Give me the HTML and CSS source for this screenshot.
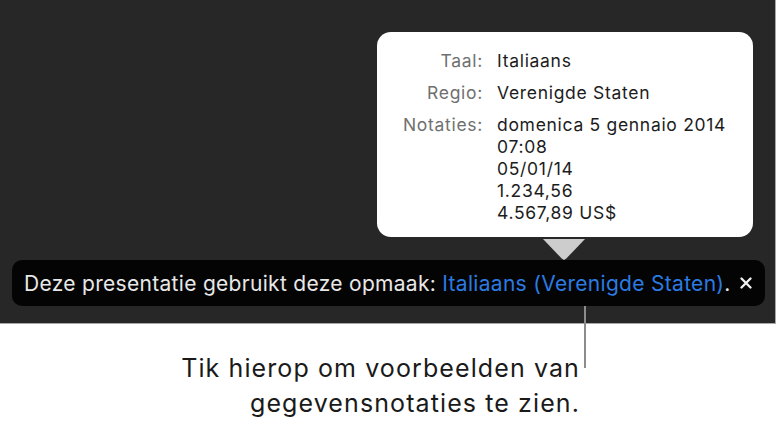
FILE: index.html
```html
<!DOCTYPE html>
<html lang="nl">
<head>
<meta charset="utf-8">
<title>Notaties</title>
<link rel="stylesheet" href="styles.css">
</head>
<body>
<div class="stage">
  <div class="popover">
    <div class="pop-grid">
      <div class="lbl">Taal:</div>
      <div class="val">Italiaans</div>
      <div class="lbl">Regio:</div>
      <div class="val">Verenigde Staten</div>
      <div class="lbl">Notaties:</div>
      <div class="val">domenica 5 gennaio 2014<br>07:08<br>05/01/14<br>1.234,56<br>4.567,89 US$</div>
    </div>
  </div>
  <div class="arrow-row"><div class="arrow"></div></div>
  <div class="banner">
    <span class="msg">Deze presentatie gebruikt deze opmaak: <span class="link">Italiaans (Verenigde Staten)</span>.</span>
    <svg class="close" width="12" height="12" viewBox="0 0 12 12"><path d="M1.5 1.5 L10.5 10.5 M10.5 1.5 L1.5 10.5" stroke="#f2f2f2" stroke-width="2.3" stroke-linecap="round"/></svg>
    <div class="leader"></div>
  </div>
</div>
<div class="caption">Tik hierop om voorbeelden van<br>gegevensnotaties te zien.</div>
</body>
</html>
```

FILE: styles.css
```css
html, body {
  margin: 0;
  padding: 0;
  background: #ffffff;
}
body {
  width: 779px;
  height: 426px;
  overflow: hidden;
  font-family: "Inter", "Liberation Sans", sans-serif;
}
.stage {
  width: 776px;
  height: 324px;
  background: #272727;
  border-right: 1px solid #a8a8a8;
  border-bottom: 1px solid #a8a8a8;
  padding-top: 32px;
  box-sizing: border-box;
  display: flex;
  flex-direction: column;
}
.popover {
  margin-left: 377px;
  width: 376px;
  height: 205px;
  box-sizing: border-box;
  background: #ffffff;
  border-radius: 14px;
  padding: 18px 0 0 24px;
}
.pop-grid {
  display: grid;
  grid-template-columns: 82px auto;
  column-gap: 14px;
  row-gap: 10px;
  font-size: 17.5px;
  letter-spacing: 0.7px;
  line-height: 22px;
}
.lbl {
  text-align: right;
  color: #707070;
}
.val {
  color: #1c1c1c;
}
.arrow-row {
  height: 21px;
  margin-top: 2px;
  position: relative;
}
.arrow {
  position: absolute;
  left: 543px;
  top: 0;
  width: 42px;
  height: 21px;
  background: #cdcdcd;
  clip-path: polygon(0 0, 100% 0, 56% 92%, 50% 100%, 44% 92%);
}
.banner {
  position: relative;
  margin-left: 12px;
  width: 753px;
  height: 46px;
  box-sizing: border-box;
  background: #040404;
  border-radius: 10px;
  display: flex;
  align-items: center;
  padding-left: 12px;
}
.msg {
  font-size: 21px;
  letter-spacing: 0.3px;
  color: #e8e8e8;
  white-space: nowrap;
}
.link {
  color: #2b7be2;
}
.close {
  margin-left: 9px;
}
.leader {
  position: absolute;
  left: 572px;
  top: 46px;
  width: 2px;
  height: 62px;
  background: #8c8c8c;
}
.caption {
  width: 580px;
  text-align: right;
  font-size: 25px;
  letter-spacing: 1.1px;
  line-height: 35px;
  color: #1a1a1a;
  margin-top: 27px;
}
```
